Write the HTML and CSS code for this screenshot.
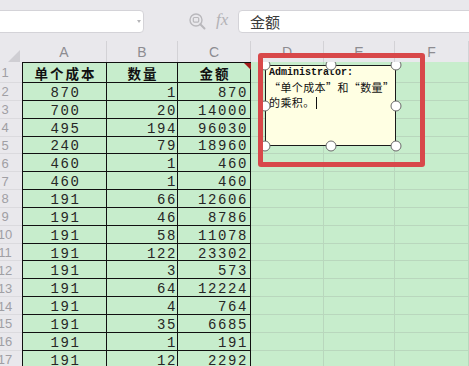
FILE: index.html
```html
<!DOCTYPE html>
<html lang="zh-CN">
<head>
<meta charset="utf-8">
<title>金额</title>
<link rel="stylesheet" href="styles.css">
</head>
<body>
<div class="toolbar">
  <div class="namebox"><span class="caret"></span></div>
  <svg class="zoom-icon" viewBox="0 0 20 20" width="20" height="20">
    <circle cx="9" cy="9" r="6" fill="none" stroke="#b9b8bc" stroke-width="1.4"/>
    <rect x="6.3" y="6.5" width="5.4" height="4.6" rx="1" fill="none" stroke="#b9b8bc" stroke-width="1.2"/>
    <line x1="13.3" y1="13.3" x2="17.5" y2="17.5" stroke="#b9b8bc" stroke-width="2" stroke-linecap="round"/>
  </svg>
  <span class="fx">fx</span>
  <div class="formula">金额</div>
</div>

<div class="colhead">
  <div class="corner"><span class="tri"></span></div>
  <div>A</div><div>B</div><div>C</div><div>D</div><div>E</div><div>F</div>
</div>

<div class="body">
  <div class="rh"><span>1</span></div><div class="t a hd">单个成本</div><div class="t b hd">数量</div><div class="t c hd flagged">金额<i class="flag"></i></div><div class="g"></div><div class="g"></div><div class="g"></div>
  <div class="rh"><span>2</span></div><div class="t a">870</div><div class="t b">1</div><div class="t c">870</div><div class="g"></div><div class="g"></div><div class="g"></div>
  <div class="rh"><span>3</span></div><div class="t a">700</div><div class="t b">20</div><div class="t c">14000</div><div class="g"></div><div class="g"></div><div class="g"></div>
  <div class="rh"><span>4</span></div><div class="t a">495</div><div class="t b">194</div><div class="t c">96030</div><div class="g"></div><div class="g"></div><div class="g"></div>
  <div class="rh"><span>5</span></div><div class="t a">240</div><div class="t b">79</div><div class="t c">18960</div><div class="g"></div><div class="g"></div><div class="g"></div>
  <div class="rh"><span>6</span></div><div class="t a">460</div><div class="t b">1</div><div class="t c">460</div><div class="g"></div><div class="g"></div><div class="g"></div>
  <div class="rh"><span>7</span></div><div class="t a">460</div><div class="t b">1</div><div class="t c">460</div><div class="g"></div><div class="g"></div><div class="g"></div>
  <div class="rh"><span>8</span></div><div class="t a">191</div><div class="t b">66</div><div class="t c">12606</div><div class="g"></div><div class="g"></div><div class="g"></div>
  <div class="rh"><span>9</span></div><div class="t a">191</div><div class="t b">46</div><div class="t c">8786</div><div class="g"></div><div class="g"></div><div class="g"></div>
  <div class="rh"><span>10</span></div><div class="t a">191</div><div class="t b">58</div><div class="t c">11078</div><div class="g"></div><div class="g"></div><div class="g"></div>
  <div class="rh"><span>11</span></div><div class="t a">191</div><div class="t b">122</div><div class="t c">23302</div><div class="g"></div><div class="g"></div><div class="g"></div>
  <div class="rh"><span>12</span></div><div class="t a">191</div><div class="t b">3</div><div class="t c">573</div><div class="g"></div><div class="g"></div><div class="g"></div>
  <div class="rh"><span>13</span></div><div class="t a">191</div><div class="t b">64</div><div class="t c">12224</div><div class="g"></div><div class="g"></div><div class="g"></div>
  <div class="rh"><span>14</span></div><div class="t a">191</div><div class="t b">4</div><div class="t c">764</div><div class="g"></div><div class="g"></div><div class="g"></div>
  <div class="rh"><span>15</span></div><div class="t a">191</div><div class="t b">35</div><div class="t c">6685</div><div class="g"></div><div class="g"></div><div class="g"></div>
  <div class="rh"><span>16</span></div><div class="t a">191</div><div class="t b">1</div><div class="t c">191</div><div class="g"></div><div class="g"></div><div class="g"></div>
  <div class="rh"><span>17</span></div><div class="t a">191</div><div class="t b">12</div><div class="t c">2292</div><div class="g"></div><div class="g"></div><div class="g"></div>

  <div class="note">
    <div class="who">Administrator:</div>
    <div class="msg">“单个成本”和“数量”</div>
    <div class="msg">的乘积。<span class="cursor"></span></div>
    <span class="h h-tl"></span><span class="h h-tm"></span><span class="h h-tr"></span>
    <span class="h h-ml"></span><span class="h h-mr"></span>
    <span class="h h-bl"></span><span class="h h-bm"></span><span class="h h-br"></span>
  </div>
</div>

<div class="highlight"></div>
</body>
</html>
```

FILE: styles.css
```css
html, body {
  margin: 0;
  padding: 0;
}
body {
  width: 469px;
  height: 366px;
  overflow: hidden;
  position: relative;
  background: #e9e8ec;
  font-family: "Liberation Sans", Arial, sans-serif;
}

/* ---------- toolbar ---------- */
.toolbar {
  height: 41px;
  display: flex;
  align-items: flex-start;
}
.namebox {
  margin: 10px 0 0 -6px;
  width: 150px;
  height: 23px;
  box-sizing: border-box;
  background: #fff;
  border: 1px solid #d4d3d8;
  border-radius: 4px;
  display: flex;
  align-items: center;
  justify-content: flex-end;
  padding-right: 2px;
}
.caret {
  width: 0;
  height: 0;
  border-left: 2.5px solid transparent;
  border-right: 2.5px solid transparent;
  border-top: 3px solid #b5b5b8;
}
.zoom-icon {
  display: block;
  margin: 11px 0 0 43px;
}
.fx {
  display: block;
  width: 16px;
  margin: 10px 0 0 9px;
  font-family: "Liberation Serif", serif;
  font-style: italic;
  font-size: 17px;
  color: #b3b2b6;
  line-height: 20px;
}
.formula {
  flex: 1;
  margin: 10px -12px 0 6px;
  height: 23px;
  box-sizing: border-box;
  background: #fff;
  border: 1px solid #d4d3d8;
  border-radius: 4px;
  padding-left: 11px;
  font-family: "Noto Sans CJK SC", sans-serif;
  font-size: 15px;
  line-height: 21px;
  color: #3a3a3a;
}

/* ---------- column header ---------- */
.colhead {
  display: grid;
  grid-template-columns: 22px 85px 71px 73px 73px 71px 74px;
  height: 21px;
}
.colhead > div {
  box-sizing: border-box;
  border-right: 1px solid #d3d2d6;
  text-align: center;
  font-size: 14px;
  line-height: 23px;
  color: #8d8c91;
}
.colhead > .corner {
  display: flex;
  justify-content: flex-end;
  align-items: flex-end;
  padding: 0 2px 2px 0;
  border-right: none;
}
.tri {
  width: 0;
  height: 0;
  border-left: 12px solid transparent;
  border-bottom: 12px solid #cfced3;
}

/* ---------- grid body ---------- */
.body {
  position: relative;
  display: grid;
  grid-template-columns: 22px 85px 71px 73px 73px 71px 74px;
  grid-template-rows: 21px;
  grid-auto-rows: 17.85px;
  height: 304px;
  overflow: hidden;
  background: #c7edcc;
}
.rh {
  background: #e9e8ec;
  border-bottom: 1px solid #dbdade;
  box-sizing: border-box;
  overflow: hidden;
  display: flex;
  align-items: center;
  padding-top: 1px;
  font-size: 13px;
  color: #a09fa4;
}
.rh span {
  flex: 0 0 34px;
  margin-left: -12px;
  text-align: center;
}
.t {
  box-sizing: border-box;
  border-right: 1px solid #111;
  border-bottom: 1px solid #111;
  display: flex;
  align-items: center;
  padding-top: 3px;
  font-family: "Liberation Mono", monospace;
  font-size: 14px;
  letter-spacing: 1.6px;
  color: #262626;
  white-space: nowrap;
}
.t.a {
  border-left: 1px solid #111;
  justify-content: center;
  padding-left: 2px;
}
.t.b {
  justify-content: flex-end;
  padding-right: 0;
}
.t.c {
  justify-content: flex-end;
  padding-right: 2px;
}
.t.hd {
  border-top: 1px solid #111;
  justify-content: center;
  padding: 1px 0 0 2px;
  font-family: "Noto Sans CJK SC", sans-serif;
  font-weight: 700;
  font-size: 13.5px;
  letter-spacing: 2px;
  color: #111;
}
.flagged {
  position: relative;
}
.flag {
  position: absolute;
  right: -1px;
  top: 0;
  width: 0;
  height: 0;
  border-left: 7px solid transparent;
  border-top: 7px solid #a31b1b;
}
.g {
  box-sizing: border-box;
  border-right: 1px solid #b9d7bd;
  border-bottom: 1px solid #b9d7bd;
}

/* ---------- comment ---------- */
.note {
  position: absolute;
  left: 265px;
  top: 3px;
  width: 131px;
  height: 81px;
  box-sizing: border-box;
  background: #ffffe3;
  border: 1px solid #1a1a1a;
  padding: 0 0 0 3px;
}
.who {
  font-family: "Liberation Mono", monospace;
  font-weight: 700;
  font-size: 10px;
  line-height: 14px;
  color: #111;
}
.msg {
  font-family: "Noto Sans CJK SC", sans-serif;
  font-size: 11px;
  letter-spacing: 0.4px;
  line-height: 14.5px;
  white-space: nowrap;
  color: #111;
}
.msg:first-of-type {
  margin-top: 3px;
}
.cursor {
  display: inline-block;
  width: 0;
  height: 12px;
  border-left: 1px solid #111;
  vertical-align: -2px;
  margin-left: 1px;
}
.h {
  position: absolute;
  width: 11px;
  height: 11px;
  box-sizing: border-box;
  border-radius: 50%;
  background: #fff;
  border: 1px solid #6a6a6a;
  transform: translate(-50%, -50%);
}
.h-tl { left: -1px; top: -1px; }
.h-tm { left: 50%; top: -1px; }
.h-tr { left: calc(100% + 1px); top: -1px; }
.h-ml { left: -1px; top: 50%; }
.h-mr { left: calc(100% + 1px); top: 50%; }
.h-bl { left: -1px; top: calc(100% + 1px); }
.h-bm { left: 50%; top: calc(100% + 1px); }
.h-br { left: calc(100% + 1px); top: calc(100% + 1px); }

/* ---------- red highlight frame ---------- */
.highlight {
  position: absolute;
  left: 258px;
  top: 53px;
  width: 167px;
  height: 114px;
  box-sizing: border-box;
  border: 5px solid #d8484a;
  border-radius: 3px;
}
```
